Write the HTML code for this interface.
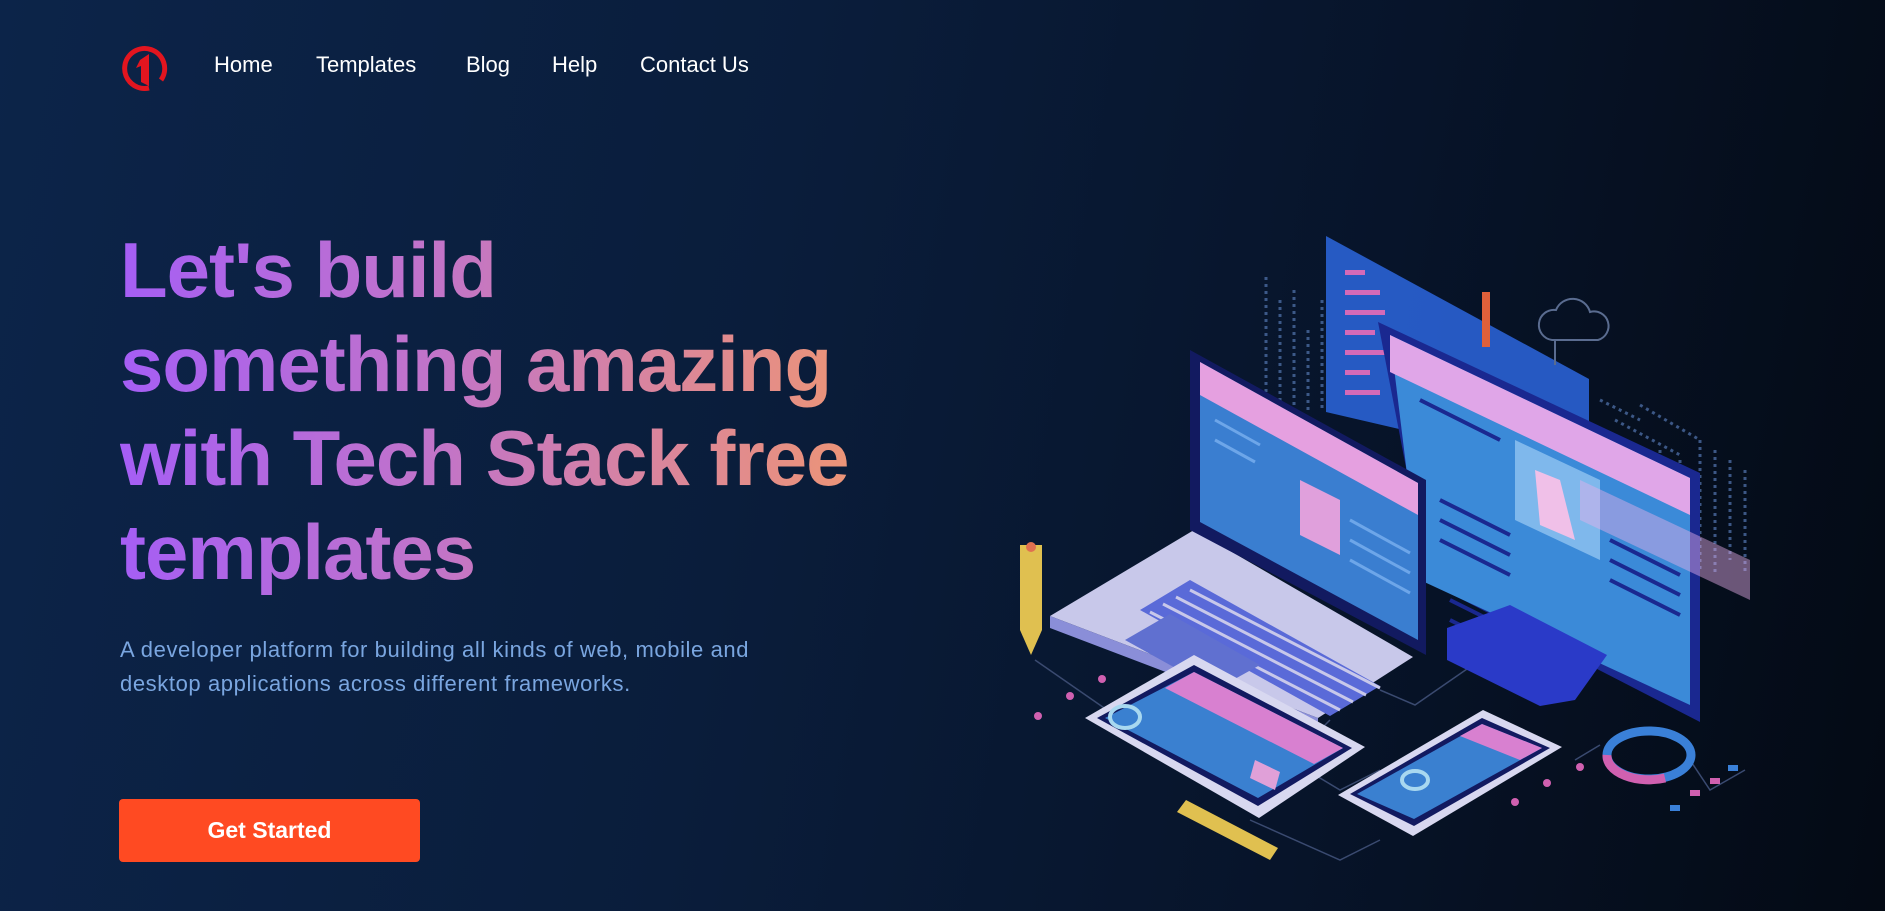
<!DOCTYPE html>
<html><head><meta charset="utf-8">
<style>
*{margin:0;padding:0;box-sizing:border-box}
html,body{width:1885px;height:911px;overflow:hidden}
body{background:linear-gradient(100deg,#0c2449 0%,#0a1d3b 40%,#07142a 70%,#040a14 100%);font-family:"Liberation Sans",sans-serif;position:relative}
.nav{position:absolute;top:52px;left:214px}
.nav a{color:#fff;text-decoration:none;font-size:22px;position:absolute;white-space:nowrap;top:0}
h1{position:absolute;left:120px;top:223px;font-size:78px;line-height:94px;font-weight:700;letter-spacing:-1px;background:linear-gradient(90deg,#a55ef5 0%,#c274c8 40%,#e08a90 75%,#f29a6a 100%);-webkit-background-clip:text;background-clip:text;color:transparent;width:800px}
p{position:absolute;left:120px;top:633px;font-size:22px;line-height:34px;color:#7aa6e0;width:700px;letter-spacing:0.6px}
.btn{position:absolute;left:119px;top:799px;width:301px;height:63px;background:#ff4a22;border-radius:4px;color:#fff;font-weight:700;font-size:23px;display:flex;align-items:center;justify-content:center}
</style></head><body>
<svg style="position:absolute;left:115px;top:40px" width="60" height="55" viewBox="115 40 60 55">
<path d="M149 88 A20 20 0 1 1 161 80" fill="none" stroke="#e3151f" stroke-width="5"/>
<path d="M140 60 L149 54 L149 86 L141 82 L141 66 L136 68 Z" fill="#e3151f"/>
</svg>
<div class="nav">
<a style="left:0">Home</a><a style="left:102px">Templates</a><a style="left:252px">Blog</a><a style="left:338px">Help</a><a style="left:426px">Contact Us</a>
</div>
<h1>Let's build<br>something amazing<br>with Tech Stack free<br>templates</h1>
<p>A developer platform for building all kinds of web, mobile and desktop applications across different frameworks.</p>
<div class="btn">Get Started</div>
<svg style="position:absolute;left:1000px;top:220px" width="780" height="650" viewBox="1000 220 780 650">
<g stroke="#3a4a70" stroke-width="1.5" fill="none">
<path d="M1035 660 L1110 712"/><path d="M1380 690 L1415 705 L1480 660"/><path d="M1330 720 L1290 760 L1340 790 L1380 770"/><path d="M1440 780 L1480 755"/><path d="M1600 745 L1575 760"/><path d="M1690 760 L1710 790 L1745 770"/><path d="M1250 820 L1340 860 L1380 840"/>
</g>
<!-- dot matrices -->
<g stroke="#4a6aa0" stroke-width="3" stroke-dasharray="3 4" opacity="0.8">
<path d="M1266 277 V412"/><path d="M1280 300 V412"/><path d="M1294 290 V412"/><path d="M1308 330 V412"/><path d="M1322 300 V412"/>
<path d="M1600 400 L1640 420"/><path d="M1615 420 L1680 455"/><path d="M1640 405 L1700 440"/>
<path d="M1700 440 V570"/><path d="M1715 450 V575"/><path d="M1730 460 V560"/><path d="M1745 470 V571"/>
<path d="M1660 450 V540"/><path d="M1680 460 V545"/>
</g>
<!-- floating panel -->
<polygon points="1326,236 1589,379 1589,473 1326,412" fill="#2a62d4" opacity="0.9"/>
<g fill="#d46ab8"><rect x="1345" y="270" width="20" height="5"/><rect x="1345" y="290" width="35" height="5"/><rect x="1345" y="310" width="40" height="5"/><rect x="1345" y="330" width="30" height="5"/><rect x="1345" y="350" width="40" height="5"/><rect x="1345" y="370" width="25" height="5"/><rect x="1345" y="390" width="35" height="5"/></g>
<rect x="1482" y="292" width="8" height="55" fill="#e0603a"/>
<path d="M1555 365 V340 M1552 340 a14 14 0 0 1 4 -30 a18 18 0 0 1 34 2 a13 13 0 0 1 8 28 z" fill="none" stroke="#5a6c90" stroke-width="2"/>
<!-- monitor -->
<polygon points="1378,322 1700,473 1700,722 1428,582" fill="#1a2890"/>
<polygon points="1390,335 1690,478 1690,705 1420,580" fill="#3b8ad8"/>
<polygon points="1390,335 1690,478 1690,515 1390,372" fill="#e0a6e8"/>
<polygon points="1515,440 1600,480 1600,560 1515,520" fill="#8cc0f0" opacity="0.85"/>
<polygon points="1535,470 1560,480 1575,540 1540,525" fill="#f0c0e8"/>
<g stroke="#1a2890" stroke-width="4"><path d="M1420 400 L1500 440"/><path d="M1440 500 L1510 535"/><path d="M1440 520 L1510 555"/><path d="M1440 540 L1510 575"/><path d="M1610 540 L1680 575"/><path d="M1610 560 L1680 595"/><path d="M1610 580 L1680 615"/><path d="M1450 600 L1540 645"/><path d="M1450 620 L1540 665"/></g>
<polygon points="1447,628 1510,605 1607,655 1575,700 1540,706 1447,660" fill="#2a3ac8"/>
<polygon points="1580,480 1750,560 1750,600 1580,520" fill="#e8b0ec" opacity="0.45"/>
<!-- laptop -->
<polygon points="1050,616 1194,530 1413,657 1318,718" fill="#c8c8ea"/>
<polygon points="1050,616 1318,718 1318,730 1050,628" fill="#8a8ed8"/>
<polygon points="1190,350 1426,480 1426,655 1190,530" fill="#121a60"/>
<polygon points="1200,362 1418,483 1418,640 1200,522" fill="#3a7ed0"/>
<polygon points="1200,362 1418,483 1418,515 1200,395" fill="#e5a0e0"/>
<polygon points="1300,480 1340,500 1340,555 1300,535" fill="#e0a0dc"/>
<g stroke="#7ab0f0" stroke-width="3" opacity="0.8"><path d="M1215 420 L1260 445"/><path d="M1215 440 L1255 462"/><path d="M1350 520 L1410 553"/><path d="M1350 540 L1410 573"/><path d="M1350 560 L1410 593"/></g>
<g fill="#5a6ad8"><polygon points="1140,610 1190,580 1380,686 1330,716"/></g>
<g stroke="#c8c8ea" stroke-width="3"><path d="M1150 612 L1340 710"/><path d="M1163 604 L1353 702"/><path d="M1176 597 L1366 695"/><path d="M1190 590 L1380 688"/></g>
<polygon points="1125,640 1170,614 1260,665 1215,690" fill="#6070d0"/>
<!-- tablet -->
<polygon points="1085,718 1194,655 1365,747 1259,818" fill="#d8d8f0"/>
<polygon points="1097,718 1194,665 1352,748 1258,806" fill="#121a60"/>
<polygon points="1105,718 1194,672 1343,748 1258,798" fill="#3a80d0"/>
<polygon points="1165,688 1194,672 1343,748 1314,764" fill="#d880d0"/>
<ellipse cx="1125" cy="717" rx="15" ry="11" fill="none" stroke="#a8d8f0" stroke-width="4"/>
<polygon points="1255,760 1280,772 1275,790 1250,778" fill="#e0a0d8"/>
<!-- phone -->
<polygon points="1338,795 1483,710 1562,747 1413,836" fill="#d8d8f0"/>
<polygon points="1350,794 1482,718 1550,748 1414,826" fill="#121a60"/>
<polygon points="1357,794 1482,724 1542,748 1414,819" fill="#3a80d0"/>
<polygon points="1460,736 1482,724 1542,748 1520,760" fill="#d880d0"/>
<ellipse cx="1415" cy="780" rx="13" ry="9" fill="none" stroke="#a8d8f0" stroke-width="4"/>
<!-- pencil -->
<polygon points="1020,545 1042,545 1042,630 1031,655 1020,630" fill="#e0c050"/>
<circle cx="1031" cy="547" r="5" fill="#e07050"/>
<!-- ruler -->
<polygon points="1177,812 1186,800 1278,848 1270,860" fill="#e0c050"/>
<!-- donut -->
<ellipse cx="1649" cy="755" rx="42" ry="24" fill="none" stroke="#3a80d8" stroke-width="9"/>
<path d="M1607 755 A42 24 0 0 0 1665 778" fill="none" stroke="#d060b0" stroke-width="9"/>
<g fill="#d060b0"><circle cx="1102" cy="679" r="4"/><circle cx="1070" cy="696" r="4"/><circle cx="1038" cy="716" r="4"/><circle cx="1580" cy="767" r="4"/><circle cx="1547" cy="783" r="4"/><circle cx="1515" cy="802" r="4"/>
<rect x="1710" y="778" width="10" height="6"/><rect x="1690" y="790" width="10" height="6"/></g>
<g fill="#3a80d8"><rect x="1728" y="765" width="10" height="6"/><rect x="1670" y="805" width="10" height="6"/></g>
</svg>
</body></html>
